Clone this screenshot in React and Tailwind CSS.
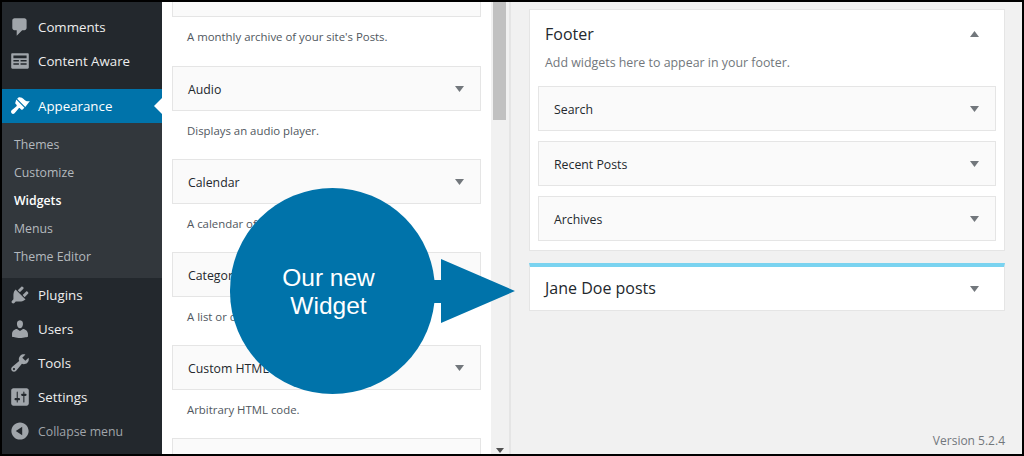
const P = {
  comments: "M5 2h9c1.1 0 2 .9 2 2v7c0 1.1-.9 2-2 2h-2l-5 5v-5H5c-1.1 0-2-.9-2-2V4c0-1.1.9-2 2-2z",
  brush: "M19 5.5c-1.6.4-3 .1-4.2-.6-1.3-.7-1.7-1.5-3-2.3-1.1-.7-2.7-.8-3.2-.3L7.4 3.4l7.4 7.4zM6.6 4.2l7.4 7.4-1.6 1.5c-.4.4-1 .4-1.4 0l-.9-.9c-.4-.4-1-.4-1.4 0-.6.6-1.2 1.5-1.9 2.4-.6.8-1.3 1.6-2 2.2-.8.6-1.8.4-2.4-.2s-.8-1.6-.2-2.4c.6-.7 1.4-1.4 2.2-2 .9-.7 1.8-1.3 2.4-1.9.4-.4.4-1 0-1.4l-.9-.9c-.4-.4-.4-1 0-1.4z",
  plug: "M13.11 4.36L9.87 7.6 8 5.73l3.24-3.24c.35-.34 1.05-.2 1.56.32.52.51.66 1.21.31 1.55zm-8 1.77l.91-1.12 9.01 9.01-1.19.84c-.71.71-2.63 1.16-3.82 1.16H6.14L4.9 17.26c-.59.59-1.54.59-2.12 0-.59-.58-.59-1.53 0-2.12l1.24-1.24v-3.88c0-1.13.4-3.19 1.09-3.89zm7.26 3.97l3.24-3.24c.34-.35 1.04-.21 1.55.31.52.51.66 1.21.31 1.55l-3.24 3.25z",
  users: "M10 9.25c-2.27 0-2.73-3.44-2.73-3.44C7 4.02 7.82 2 9.97 2c2.16 0 2.98 2.02 2.71 3.81 0 0-.41 3.44-2.68 3.44zm0 2.57L12.72 10c2.39 0 4.52 2.33 4.52 4.53v2.49s-3.65 1.13-7.24 1.13c-3.65 0-7.24-1.13-7.24-1.13v-2.49c0-2.25 1.94-4.48 4.47-4.48z",
  tools: "M16.68 9.77c-1.34 1.34-3.3 1.67-4.95.99l-5.41 6.52c-.99.99-2.59.99-3.58 0s-.99-2.59 0-3.57l6.52-5.42c-.68-1.65-.35-3.61.99-4.95 1.28-1.28 3.12-1.62 4.72-1.06l-2.89 2.89 2.82 2.82 2.86-2.87c.53 1.58.18 3.39-1.08 4.65zM3.81 16.21c.4.39 1.04.39 1.43 0 .4-.4.4-1.04 0-1.43-.39-.4-1.03-.4-1.43 0-.39.39-.39 1.03 0 1.43z",
  settings: "M18 16V4c0-1.1-.9-2-2-2H4c-1.1 0-2 .9-2 2v12c0 1.1.9 2 2 2h12c1.1 0 2-.9 2-2zM8 11h1c.55 0 1 .45 1 1s-.45 1-1 1H8v1.5c0 .28-.22.5-.5.5s-.5-.22-.5-.5V13H6c-.55 0-1-.45-1-1s.45-1 1-1h1V5.5c0-.28.22-.5.5-.5s.5.22.5.5V11zm5-2h-1c-.55 0-1-.45-1-1s.45-1 1-1h1V5.5c0-.28.22-.5.5-.5s.5.22.5.5V7h1c.55 0 1 .45 1 1s-.45 1-1 1h-1v5.5c0 .28-.22.5-.5.5s-.5-.22-.5-.5V9z",
  collapse: "M10 2.16c4.33 0 7.84 3.51 7.84 7.84s-3.51 7.84-7.84 7.84S2.16 14.33 2.16 10 5.71 2.16 10 2.16zm2 11.72V6.12L6.18 9.97z",
  table: "M3 3h14c.6 0 1 .4 1 1v12c0 .6-.4 1-1 1H3c-.6 0-1-.4-1-1V4c0-.6.4-1 1-1zm1 2v2.5h12V5H4zm0 4v1.5h5V9H4zm6.5 0v1.5H16V9h-5.5zM4 12v1.5h5V12H4zm6.5 0v1.5H16V12h-5.5z",
};

function Dash({ d, className }) {
  return (
    <svg viewBox="0 0 20 20" className={className} fill="currentColor" fillRule="evenodd">
      <path d={d} />
    </svg>
  );
}

function Arrow({ up }) {
  return (
    <svg viewBox="0 0 9 6" className="w-[9px] h-[6px] shrink-0 text-[#72777c]" fill="currentColor">
      <polygon points={up ? "0,6 9,6 4.5,0" : "0,0 9,0 4.5,6"} />
    </svg>
  );
}

function MenuRow({ icon, label }) {
  return (
    <div className="h-[34px] flex items-center text-[#eeeeee] text-[13.3px]">
      <Dash d={icon} className="w-[22px] h-[22px] ml-[7px] mr-[7px] text-[#a0a5aa]" />
      <span className="pt-[2px]">{label}</span>
    </div>
  );
}

function Sidebar() {
  return (
    <aside className="w-[160px] shrink-0 bg-[#23282d] pt-2 flex flex-col">
      <MenuRow icon={P.comments} label="Comments" />
      <MenuRow icon={P.table} label="Content Aware" />
      <div className="mt-[11px] h-[34px] bg-[#0073aa] flex items-center text-white text-[13.3px] relative">
        <Dash d={P.brush} className="w-[22px] h-[22px] ml-[7px] mr-[7px]" />
        <span className="pt-[2px]">Appearance</span>
        <span className="absolute right-0 top-[9px] w-0 h-0 border-y-8 border-y-transparent border-r-8 border-r-[#ffffff]" />
      </div>
      <div className="bg-[#32373c] h-[155px] pt-[8px] text-[12.3px] text-[#b4b9be]">
        {["Themes", "Customize"].map((t) => (
          <div key={t} className="h-[28px] pl-3 flex items-center">{t}</div>
        ))}
        <div className="h-[28px] pl-3 flex items-center text-white font-semibold">Widgets</div>
        {["Menus", "Theme Editor"].map((t) => (
          <div key={t} className="h-[28px] pl-3 flex items-center">{t}</div>
        ))}
      </div>
      <MenuRow icon={P.plug} label="Plugins" />
      <MenuRow icon={P.users} label="Users" />
      <MenuRow icon={P.tools} label="Tools" />
      <MenuRow icon={P.settings} label="Settings" />
      <div className="h-[34px] flex items-center text-[#a0a5aa] text-[12.3px]">
        <Dash d={P.collapse} className="w-[22px] h-[22px] ml-[7px] mr-[7px]" />
        <span className="pt-[2px]">Collapse menu</span>
      </div>
    </aside>
  );
}

function WidgetBar({ title }) {
  return (
    <div className="h-[45px] bg-[#fafafa] border border-[#e5e5e5] flex items-center justify-between pl-[15px] pr-4 text-[12.3px] font-medium text-[#23282d]">
      <span className="pt-[3px]">{title}</span>
      <Arrow />
    </div>
  );
}

const widgets = [
  ["Audio", "Displays an audio player."],
  ["Calendar", "A calendar of your site's Posts."],
  ["Categories", "A list or dropdown of categories."],
  ["Custom HTML", "Arbitrary HTML code."],
];

function Available() {
  return (
    <section className="w-[329px] shrink-0 bg-white px-[10px] overflow-hidden flex flex-col">
      <div className="h-[15px] shrink-0 bg-[#fafafa] border-x border-b border-[#e5e5e5]" />
      <p className="h-[49px] shrink-0 pt-[11px] pl-[15px] text-[11.4px] leading-[18px] text-[#50575e]">
        A monthly archive of your site's Posts.
      </p>
      {widgets.map(([t, d]) => (
        <div key={t} className="shrink-0">
          <WidgetBar title={t} />
          <p className="h-[48px] pt-[11px] pl-[15px] text-[11.4px] leading-[18px] text-[#50575e]">{d}</p>
        </div>
      ))}
      <div className="h-[20px] shrink-0 bg-[#fafafa] border-x border-t border-[#e5e5e5]" />
    </section>
  );
}

function Scrollbar() {
  return (
    <div className="w-[20px] shrink-0 bg-[#f1f1f1] pl-[2px] pr-[3px] flex flex-col justify-between items-center border-r-2 border-[#e5e5e5]">
      <div className="w-[13px] h-[118px] bg-[#c1c1c1]" />
      <svg viewBox="0 0 8 5" className="w-2 h-[5px] mb-[1px] text-[#505050]" fill="currentColor">
        <polygon points="0,0 8,0 4,5" />
      </svg>
    </div>
  );
}

function Sidebars() {
  return (
    <main className="flex-1 bg-[#f1f1f1] pt-[7px] pl-[18px] pr-[17px] flex flex-col">
      <div className="h-[242px] bg-white border border-[#e5e5e5] px-2 flex flex-col">
        <div className="h-[76px] flex flex-col">
          <div className="h-[48px] flex items-center justify-between pl-[7px] pr-[17px]">
            <h2 className="text-[16px] font-medium text-[#23282d]">Footer</h2>
            <Arrow up />
          </div>
          <p className="pl-[7px] text-[12.4px] text-[#72777c] mt-[-4px]">Add widgets here to appear in your footer.</p>
        </div>
        <div className="flex flex-col gap-[10px]">
          <WidgetBar title="Search" />
          <WidgetBar title="Recent Posts" />
          <WidgetBar title="Archives" />
        </div>
      </div>
      <div className="mt-[12px] h-[48px] bg-white border border-[#e5e5e5] border-t-4 border-t-[#7ad3f0] flex items-center justify-between pl-[15px] pr-[25px]">
        <h2 className="text-[16px] font-medium text-[#23282d] pb-[2px]">Jane Doe posts</h2>
        <Arrow />
      </div>
      <div className="mt-auto mb-[4px] text-right text-[12px] text-[#72777c]">Version 5.2.4</div>
    </main>
  );
}

function Callout() {
  return (
    <>
      <div className="absolute left-[228px] top-[186px] w-[205px] h-[206px] rounded-full bg-[#0073aa] flex items-center justify-center text-center text-white text-[24.5px] leading-[28px] pr-[8px] pt-[2px] font-['Liberation_Sans',sans-serif]">
        <span>Our new<br />Widget</span>
      </div>
      <svg viewBox="0 0 86 64" className="absolute left-[427px] top-[257px] w-[86px] h-[64px]">
        <polygon points="0,21 12,21 12,0 86,32 12,64 12,44 0,44" fill="#0073aa" />
      </svg>
    </>
  );
}

export default function App() {
  return (
    <div className="relative w-[1024px] h-[456px] border-2 border-black flex overflow-hidden font-['Open_Sans',sans-serif]">
      <Sidebar />
      <Available />
      <Scrollbar />
      <Sidebars />
      <Callout />
    </div>
  );
}
